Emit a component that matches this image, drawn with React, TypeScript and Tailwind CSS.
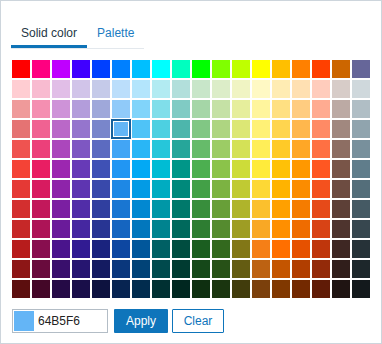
import React from "react";

const base: string[][] = [
  ["FFCDD2","EF9A9A","E57373","EF5350","F44336","E53935","D32F2F","C62828","B71C1C"],
  ["F8BBD0","F48FB1","F06292","EC407A","E91E63","D81B60","C2185B","AD1457","880E4F"],
  ["E1BEE7","CE93D8","BA68C8","AB47BC","9C27B0","8E24AA","7B1FA2","6A1B9A","4A148C"],
  ["D1C4E9","B39DDB","9575CD","7E57C2","673AB7","5E35B1","512DA8","4527A0","311B92"],
  ["C5CAE9","9FA8DA","7986CB","5C6BC0","3F51B5","3949AB","303F9F","283593","1A237E"],
  ["BBDEFB","90CAF9","64B5F6","42A5F5","2196F3","1E88E5","1976D2","1565C0","0D47A1"],
  ["B3E5FC","81D4FA","4FC3F7","29B6F6","03A9F4","039BE5","0288D1","0277BD","01579B"],
  ["B2EBF2","80DEEA","4DD0E1","26C6DA","00BCD4","00ACC1","0097A7","00838F","006064"],
  ["B2DFDB","80CBC4","4DB6AC","26A69A","009688","00897B","00796B","00695C","004D40"],
  ["C8E6C9","A5D6A7","81C784","66BB6A","4CAF50","43A047","388E3C","2E7D32","1B5E20"],
  ["DCEDC8","C5E1A5","AED581","9CCC65","8BC34A","7CB342","689F38","558B2F","33691E"],
  ["F0F4C3","E6EE9C","DCE775","D4E157","CDDC39","C0CA33","AFB42B","9E9D24","827717"],
  ["FFF9C4","FFF59D","FFF176","FFEE58","FFEB3B","FDD835","FBC02D","F9A825","F57F17"],
  ["FFECB3","FFE082","FFD54F","FFCA28","FFC107","FFB300","FFA000","FF8F00","FF6F00"],
  ["FFE0B2","FFCC80","FFB74D","FFA726","FF9800","FB8C00","F57C00","EF6C00","E65100"],
  ["FFCCBC","FFAB91","FF8A65","FF7043","FF5722","F4511E","E64A19","D84315","BF360C"],
  ["D7CCC8","BCAAA4","A1887F","8D6E63","795548","6D4C41","5D4037","4E342E","3E2723"],
  ["CFD8DC","B0BEC5","90A4AE","78909C","607D8B","546E7A","455A64","37474F","263238"],
];

const top = ["FF0000","FF0080","BF00FF","4000FF","0040FF","0080FF","00BFFF","00FFFF","00FFBF","00FF00","80FF00","BFFF00","FFFF00","FFBF00","FF8000","FF4000","CC6600","666699"];

function darken(hex: string, f: number) {
  const n = parseInt(hex, 16);
  const r = Math.round(((n >> 16) & 255) * f);
  const g = Math.round(((n >> 8) & 255) * f);
  const b = Math.round((n & 255) * f);
  return "#" + [r, g, b].map((v) => v.toString(16).padStart(2, "0")).join("");
}

const columns: string[][] = base.map((col, i) => [
  "#" + top[i],
  ...col.map((c) => "#" + c),
  darken(col[8], 0.77),
  darken(col[8], 0.5),
]);

export default function App() {
  const rows = Array.from({ length: 12 }, (_, r) => r);
  return (
    <div
      className="w-[382px] h-[344px] border border-[#cdd5dc] bg-white px-[10px] pt-[24px] text-[12px]"
      style={{ fontFamily: '"Liberation Sans", Arial, sans-serif' }}
    >
      <div className="flex w-max border-b border-[#e3e8ed]">
        <div className="px-[10px] leading-[16px] pb-[4px] border-b-[3px] border-[#0e73b7] text-[#253746]">
          Solid color
        </div>
        <div className="px-[10px] leading-[16px] pb-[4px] border-b-[3px] border-transparent text-[#1b7cc2]">
          Palette
        </div>
      </div>
      <div className="mt-[11px] grid grid-cols-[repeat(18,18px)] grid-rows-[repeat(12,18px)] gap-[2px] pl-[1px]">
        {rows.map((r) =>
          columns.map((col, c) => {
            const selected = r === 3 && c === 5;
            return (
              <div
                key={`${r}-${c}`}
                className={
                  selected
                    ? "w-[18px] h-[18px] outline-2 outline-solid outline-[#15609c] -outline-offset-1 shadow-[inset_0_0_0_2px_#ffffff]"
                    : "w-[18px] h-[18px]"
                }
                style={{ backgroundColor: col[r] }}
              />
            );
          })
        )}
      </div>
      <div className="mt-[11px] flex items-center pl-[1px]">
        <div className="w-[96px] h-[24px] border border-[#b3bdc6] flex items-center p-[1px]">
          <div className="w-[20px] h-[20px] bg-[#64B5F6]" />
          <span className="ml-[4px] text-[#222] leading-[16px]">64B5F6</span>
        </div>
        <button className="ml-[6px] w-[54px] h-[24px] bg-[#0e75bb] text-white leading-[16px] rounded-[1px]">
          Apply
        </button>
        <button className="ml-[4px] w-[52px] h-[24px] border border-[#0e75bb] bg-white text-[#0e75bb] leading-[16px] rounded-[1px]">
          Clear
        </button>
      </div>
    </div>
  );
}
